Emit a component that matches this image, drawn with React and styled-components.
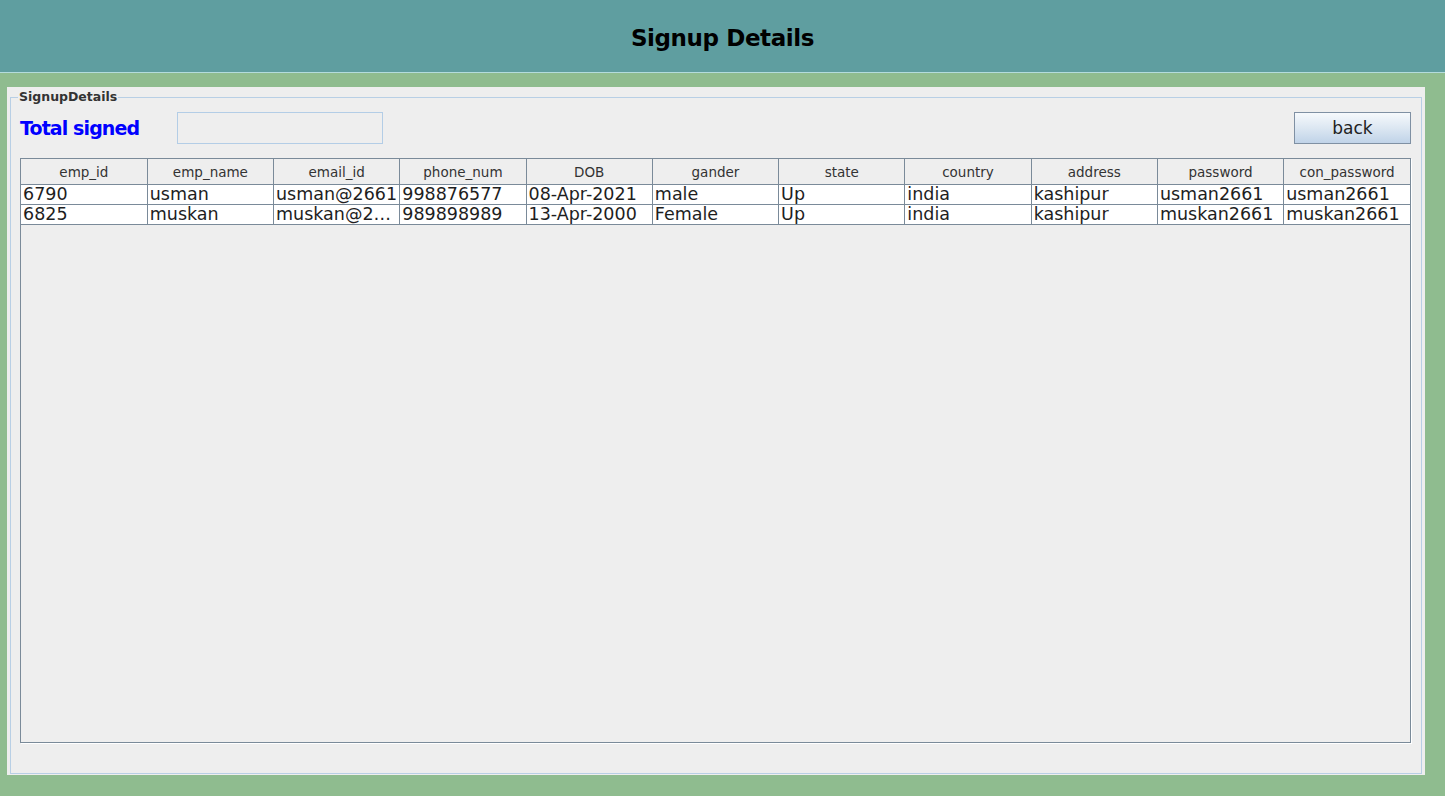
import React from "react";
import styled, { createGlobalStyle } from "styled-components";

const GlobalStyle = createGlobalStyle`
  html, body {
    margin: 0;
    padding: 0;
    height: 100%;
  }
  body {
    background: #8fbc8f;
    font-family: "DejaVu Sans", "Liberation Sans", sans-serif;
  }
  #root {
    height: 100%;
  }
`;

const Page = styled.div`
  height: 100%;
  display: flex;
  flex-direction: column;
`;

const TopBar = styled.header`
  height: 73px;
  flex: none;
  padding-top: 3px;
  box-sizing: border-box;
  background: #5f9ea0;
  border-bottom: 1px solid #b4dcdc;
  display: flex;
  align-items: center;
  justify-content: center;
`;

const Title = styled.h1`
  margin: 0;
  font-size: 23px;
  font-weight: bold;
  letter-spacing: -0.4px;
  color: #000;
`;

const Panel = styled.div`
  flex: 1;
  min-height: 0;
  margin: 14px 20px 21px 7px;
  padding: 2px 3px 1px 3px;
  background: #eeeeee;
  display: flex;
  flex-direction: column;
`;

const Group = styled.fieldset`
  flex: 1;
  min-height: 0;
  min-width: 0;
  margin: 0;
  padding: 7px 10px 30px 9px;
  border: 1px solid #b8cfe5;
  display: flex;
  flex-direction: column;
`;

const Legend = styled.legend`
  margin-left: -2px;
  padding: 0 1px;
  font-size: 12.5px;
  line-height: 16px;
  font-weight: bold;
  color: #333;
`;

const Toolbar = styled.div`
  height: 32px;
  display: flex;
  align-items: center;
`;

const TotalLabel = styled.span`
  width: 157px;
  font-size: 19px;
  font-weight: bold;
  letter-spacing: -0.9px;
  color: #0000ff;
`;

const CountBox = styled.input`
  box-sizing: border-box;
  width: 206px;
  height: 32px;
  background: #eeeeee;
  border: 1px solid #b3cde6;
  outline: none;
`;

const BackButton = styled.button`
  box-sizing: border-box;
  margin-left: auto;
  width: 117px;
  height: 32px;
  border: 1px solid #7f90a3;
  background: linear-gradient(#f6f9fc, #dce7f2 50%, #c0d3e8);
  font-family: "DejaVu Sans", sans-serif;
  font-size: 17px;
  color: #222;
  cursor: pointer;
`;

const TableFrame = styled.div`
  flex: 1;
  margin-top: 14px;
  border: 1px solid #7a8a99;
  box-shadow: 1px 1px 0 #ffffff;
  background: #eeeeee;
  overflow: hidden;
`;

const Grid = styled.table`
  width: 100%;
  table-layout: fixed;
  border-collapse: collapse;
`;

const HeadCell = styled.th`
  box-sizing: border-box;
  height: 25px;
  padding: 1px 2px 0;
  background: #eeeeee;
  border-right: 1px solid #7a8a99;
  border-bottom: 1px solid #7a8a99;
  font-size: 13.5px;
  font-weight: normal;
  color: #333;
  text-align: center;
  white-space: nowrap;
  overflow: hidden;

  &:last-child {
    border-right: none;
  }
`;

const Cell = styled.td`
  box-sizing: border-box;
  height: 20px;
  padding: 0 0 0 2px;
  background: #ffffff;
  border-right: 1px solid #7a8a99;
  border-bottom: 1px solid #7a8a99;
  font-size: 17.5px;
  line-height: 19px;
  color: #1e1e1e;
  white-space: nowrap;
  overflow: hidden;
  text-overflow: ellipsis;

  &:last-child {
    border-right: none;
  }
`;

const columns = [
  "emp_id",
  "emp_name",
  "email_id",
  "phone_num",
  "DOB",
  "gander",
  "state",
  "country",
  "address",
  "password",
  "con_password",
];

const rows = [
  ["6790", "usman", "usman@2661", "998876577", "08-Apr-2021", "male", "Up", "india", "kashipur", "usman2661", "usman2661"],
  ["6825", "muskan", "muskan@2661", "989898989", "13-Apr-2000", "Female", "Up", "india", "kashipur", "muskan2661", "muskan2661"],
];

const App = () => {
  return (
    <>
      <GlobalStyle />
      <Page>
        <TopBar>
          <Title>Signup Details</Title>
        </TopBar>
        <Panel>
          <Group>
            <Legend>SignupDetails</Legend>
            <Toolbar>
              <TotalLabel>Total signed</TotalLabel>
              <CountBox readOnly />
              <BackButton>back</BackButton>
            </Toolbar>
            <TableFrame>
              <Grid>
                <thead>
                  <tr>
                    {columns.map((c) => (
                      <HeadCell key={c}>{c}</HeadCell>
                    ))}
                  </tr>
                </thead>
                <tbody>
                  {rows.map((r, i) => (
                    <tr key={i}>
                      {r.map((v, j) => (
                        <Cell key={j}>{v}</Cell>
                      ))}
                    </tr>
                  ))}
                </tbody>
              </Grid>
            </TableFrame>
          </Group>
        </Panel>
      </Page>
    </>
  );
};

export default App;
